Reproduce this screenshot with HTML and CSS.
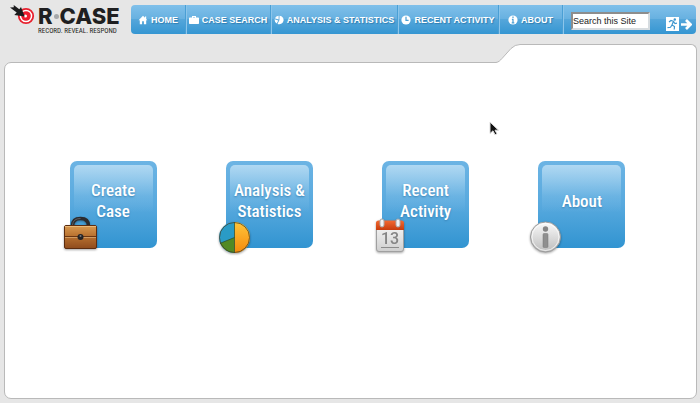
FILE: index.html
```html
<!DOCTYPE html>
<html lang="en">
<head>
<meta charset="utf-8">
<title>R-CASE</title>
<link rel="stylesheet" href="styles.css">
</head>
<body>
<header class="header">
  <a class="logo" href="#">
    <svg class="logo-mark" viewBox="0 0 26 22" aria-hidden="true">
      <circle cx="16" cy="11" r="7.200" fill="#fff" stroke="#e8202e" stroke-width="1.800"/>
      <circle cx="16" cy="11" r="4.800" fill="#ee1c2e"/>
      <circle cx="15.500" cy="11" r="1.500" fill="#fff"/>
      <path d="M0 2.500L3.800 2.300 3.700 0 9.300 4.200 11 2l3.700 9.500L4.300 10l2.400-2.500z" fill="#1c1c1e"/>
    </svg>
    <span class="logo-text">
      <span class="logo-name">R<span class="logo-dot"></span>CASE</span>
      <span class="logo-tag">RECORD. REVEAL. RESPOND</span>
    </span>
  </a>
  <div class="bar">
    <nav class="nav">
      <a class="nav-item" href="#"><svg class="nav-icon" viewBox="0 0 10 10" aria-hidden="true"><path d="M5 .8L.6 5.200h1.200V9.200h2.300V6.300h1.800v2.900h2.300V5.200h1.200L8.200 4V1.500H7v1.300z"/></svg>HOME</a>
      <a class="nav-item" href="#"><svg class="nav-icon" viewBox="0 0 10 10" aria-hidden="true"><path d="M3 2.500V1h4v1.500h2.300q.7 0 .7.700v5q0 .8-.7.800H.7Q0 9 0 8.200v-5q0-.7.700-.7zM4 2.500h2v-.6H4z"/></svg>CASE SEARCH</a>
      <a class="nav-item" href="#"><svg class="nav-icon" viewBox="0 0 10 10" aria-hidden="true"><path d="M5.600.7A4.300 4.300 0 1 1 3.500 8.900L5.400 5zM4.600.7v3.800L.9 3.300A4.300 4.300 0 0 1 4.600.7zM.6 4.300l3.700 1.100-1.600 3A4.300 4.300 0 0 1 .6 4.300z"/></svg>ANALYSIS &amp; STATISTICS</a>
      <a class="nav-item" href="#"><svg class="nav-icon" viewBox="0 0 10 10" aria-hidden="true"><circle cx="5" cy="5" r="4.600"/><path class="nav-icon-cut" d="M5 1.800v3.600h2.600"/></svg>RECENT ACTIVITY</a>
      <a class="nav-item" href="#"><svg class="nav-icon" viewBox="0 0 10 10" aria-hidden="true"><circle cx="5" cy="5" r="4.600"/><path class="nav-icon-cut" d="M5 1.600v1.300M3.900 4.300H5v3.400M3.700 7.800h2.600"/></svg>ABOUT</a>
    </nav>
    <form class="search">
      <input class="search-box" type="text" value="Search this Site" aria-label="Search this Site">
      <button class="search-go" type="button" aria-label="Go">
        <svg class="go-icon" viewBox="0 0 26 15" aria-hidden="true">
          <path d="M0 0h13v14H0z" fill="#fff"/>
          <circle cx="8.800" cy="2.500" r="1.200" fill="#3f97cf"/>
          <path d="M3 5l2-1.500 2.500.8L6 8l2.500 1.500-.3 3M6 8l-1.500 2.300-3 .4M7.500 4.500L9 6.500l2-.3" fill="none" stroke="#3f97cf" stroke-width="1.200"/>
          <path d="M15 7.500h9M20 3l4.500 4.500L20 12" fill="none" stroke="#fff" stroke-width="2.700"/>
        </svg>
      </button>
    </form>
  </div>
</header>

<div class="folder">
  <div class="tab">
    <svg class="tab-slope" viewBox="0 0 24 19" aria-hidden="true">
      <path d="M0 18.500C3 18 4 16.500 6 14.500L15 4.500Q19 .5 24 .5V19H0z" fill="#fff"/>
      <path d="M0 18.500C3 18 4 16.500 6 14.500L15 4.500Q19 .5 24 .5" fill="none" stroke="#b9b9b9"/>
    </svg>
    <div class="tab-top"></div>
  </div>
  <main class="panel">
    <a class="tile" href="#">
      <span class="tile-label">Create<br>Case</span>
      <svg class="tile-icon" viewBox="0 0 40 40" aria-hidden="true">
        <defs><linearGradient id="leather" x2="0" y2="1"><stop offset="0" stop-color="#d99a50"/><stop offset=".45" stop-color="#b97230"/><stop offset="1" stop-color="#8f4b1c"/></linearGradient></defs>
        <path d="M12.500 13q0-7.500 8-7.500t8 7.500" fill="none" stroke="#2b2b2d" stroke-width="3.500"/>
        <path d="M12.500 12q.5-6.500 8-6.500" fill="none" stroke="#606064"/>
        <rect x="4.500" y="12.500" width="32" height="23" rx="1.500" fill="url(#leather)" stroke="#5c2d10"/>
        <path d="M5 13.500h31" stroke="#e8b878"/>
        <path d="M5 23.500h31" stroke="#6b3612"/><path d="M5 24.500h31" stroke="#d19a60"/>
        <circle cx="20.500" cy="24" r="3" fill="#242426"/><circle cx="20.500" cy="23" r="1" fill="#77777a"/>
      </svg>
    </a>
    <a class="tile" href="#">
      <span class="tile-label">Analysis &amp;<br>Statistics</span>
      <svg class="tile-icon" viewBox="0 0 40 40" aria-hidden="true">
        <defs><linearGradient id="gold" x2="0" y2="1"><stop offset="0" stop-color="#ffc53a"/><stop offset="1" stop-color="#f58a0c"/></linearGradient></defs>
        <circle cx="18.500" cy="24.500" r="15.500" fill="#2a9bc6"/>
        <path d="M18.500 24.500V40a15.500 15.500 0 0 1-14.400-9.700z" fill="#528a24"/>
        <path d="M18.500 9a15.500 15.500 0 0 1 0 31z" fill="url(#gold)"/>
        <path d="M18.500 9v31M18.500 24.500L4.100 30.300" stroke="#2c4a2c" stroke-opacity=".7"/>
        <circle cx="18.500" cy="24.500" r="15" fill="none" stroke="#473b20" stroke-opacity=".7"/>
      </svg>
    </a>
    <a class="tile" href="#">
      <span class="tile-label">Recent<br>Activity</span>
      <svg class="tile-icon" viewBox="0 0 40 40" aria-hidden="true">
        <defs><linearGradient id="page" x2="0" y2="1"><stop offset="0" stop-color="#fafafa"/><stop offset="1" stop-color="#cfcfcf"/></linearGradient>
        <linearGradient id="red" x2="0" y2="1"><stop offset="0" stop-color="#f36a32"/><stop offset="1" stop-color="#c83c0c"/></linearGradient></defs>
        <rect x="4.500" y="8.500" width="27" height="30" rx="2.500" fill="url(#page)" stroke="#a0a0a0"/>
        <path d="M4 17V10q0-2.500 2.500-2.500h23Q32 7.500 32 10v7z" fill="url(#red)"/>
        <rect x="8" y="6" width="4" height="8" rx="2" fill="#f2f2f2" stroke="#a7a7a7"/>
        <rect x="24" y="6" width="4" height="8" rx="2" fill="#f2f2f2" stroke="#a7a7a7"/>
        <text class="day" x="18" y="31" text-anchor="middle">13</text>
        <path d="M9 34.500h18" stroke="#8b8b8b"/>
      </svg>
    </a>
    <a class="tile" href="#">
      <span class="tile-label">About</span>
      <svg class="tile-icon" viewBox="0 0 40 40" aria-hidden="true">
        <defs><linearGradient id="silver" x2="0" y2="1"><stop offset="0" stop-color="#fafafa"/><stop offset="1" stop-color="#bdbdbd"/></linearGradient></defs>
        <circle cx="17.500" cy="24" r="15" fill="url(#silver)" stroke="#9b9b9b"/>
        <circle cx="17.500" cy="24" r="13.500" fill="none" stroke="#fff" stroke-opacity=".7"/>
        <circle cx="17.500" cy="16" r="2.700" fill="#858585"/>
        <rect x="15" y="20.500" width="5" height="14" rx="1" fill="#8f8f8f" stroke="#777" stroke-width=".5"/>
      </svg>
    </a>
    <svg class="pointer" viewBox="0 0 12 17" aria-hidden="true">
      <path d="M1 1v11.500l3-2.700 2 4 2-1-2-3.600h3.500z" fill="#111" stroke="#ddd"/>
    </svg>
  </main>
</div>
</body>
</html>
```
FILE: styles.css
```css
* {
  box-sizing: border-box;
}

body {
  margin: 0;
  min-height: 100vh;
  display: flex;
  flex-direction: column;
  background: #e6e6e6;
  font-family: "Liberation Sans", Arial, sans-serif;
}

a {
  color: inherit;
  text-decoration: none;
}

.header {
  display: flex;
  gap: 11px;
  padding: 5px 4px 0 10px;
}

.logo {
  flex: none;
  display: flex;
  gap: 2px;
  height: 29px;
  color: #1f1f21;
}

.logo-mark {
  width: 26px;
  height: 22px;
}

.logo-text {
  width: 82px;
  display: flex;
  flex-direction: column;
  white-space: nowrap;
}

.logo-name {
  display: flex;
  align-items: center;
  gap: 1px;
  font: 800 22px/22px Inter, sans-serif;
}

.logo-dot {
  width: 5px;
  height: 5px;
  border-radius: 50%;
  background: #a5a8ab;
}

.logo-tag {
  font: 400 7px/8px "Roboto Condensed", Roboto, sans-serif;
}

.bar {
  flex: 1;
  height: 29px;
  display: grid;
  grid-template-columns: 432fr 133fr;
  border-radius: 4px;
  background: linear-gradient(#80c0ea, #66b0e0 50%, #55a6da 50%, #3596d2);
}

.nav {
  display: grid;
  grid-template-columns: 55fr 85fr 127fr 101fr 64fr;
}

.nav-item {
  display: flex;
  align-items: center;
  justify-content: center;
  gap: 3px;
  border-right: 1px solid #4a9fd5;
  box-shadow: 1px 0 #8cc5ea;
  color: #fff;
  font-size: 9px;
  font-weight: 700;
  white-space: nowrap;
  text-shadow: 1px 1px 1px #2f7db0;
}

.nav-icon {
  width: 10px;
  height: 10px;
  fill: #fff;
}

.nav-icon-cut {
  fill: none;
  stroke: #4a9fd5;
  stroke-width: 1.200;
}

.search {
  display: flex;
  align-items: center;
  justify-content: space-between;
  padding: 3px 4px 0 8px;
}

.search-box {
  width: 79px;
  height: 18px;
  padding: 0;
  border: 2px solid;
  border-color: #8d8d8d #d6dce0 #d6dce0 #8d8d8d;
  background: #fff;
  color: #222;
  font: 9px "Liberation Sans", Arial, sans-serif;
}

.search-go {
  align-self: flex-end;
  display: flex;
  padding: 0 0 2px;
  border: 0;
  background: none;
}

.go-icon {
  width: 26px;
  height: 15px;
}

.folder {
  flex: 1;
  display: flex;
  flex-direction: column;
  padding: 10px 3px 4px 4px;
}

.tab {
  position: relative;
  z-index: 1;
  display: flex;
  align-self: flex-end;
  width: 29%;
  margin-bottom: -1px;
}

.tab-slope {
  flex: none;
  width: 24px;
  height: 19px;
}

.tab-top {
  flex: 1;
  height: 19px;
  border: 1px solid #b9b9b9;
  border-width: 1px 1px 0 0;
  border-top-right-radius: 6px;
  background: #fff;
}

.panel {
  position: relative;
  flex: 1;
  display: grid;
  grid-template-columns: repeat(4, 1fr);
  justify-items: center;
  align-items: start;
  padding: 98px 36px 40px 30px;
  border: 1px solid #b9b9b9;
  border-radius: 7px 0 7px 7px;
  background: #fff;
}

.tile {
  position: relative;
  width: 87px;
  height: 87px;
  padding: 4px;
  border-radius: 7px;
  background: linear-gradient(#6cb4e4, #58a9de 50%, #3194d1);
}

.tile-label {
  display: flex;
  height: 100%;
  padding-bottom: 7px;
  align-items: center;
  justify-content: center;
  border-radius: 5px;
  background: linear-gradient(#b0d8f2, rgb(120 187 230 / 50%) 40%, transparent 60%);
  color: #fff;
  font: 500 17px/21px "Roboto Condensed", Roboto, sans-serif;
  text-align: center;
  white-space: nowrap;
  text-shadow: 0 1px 2px #3a83b5;
}

.tile-icon {
  position: absolute;
  left: -10px;
  bottom: -5px;
  width: 40px;
  height: 40px;
  filter: drop-shadow(0 1px 1px rgb(0 0 0 / 35%));
}

.day {
  fill: #858585;
  font: 500 16px Roboto, sans-serif;
}

.pointer {
  position: absolute;
  left: 70%;
  top: 58px;
  width: 12px;
  height: 17px;
}
```
